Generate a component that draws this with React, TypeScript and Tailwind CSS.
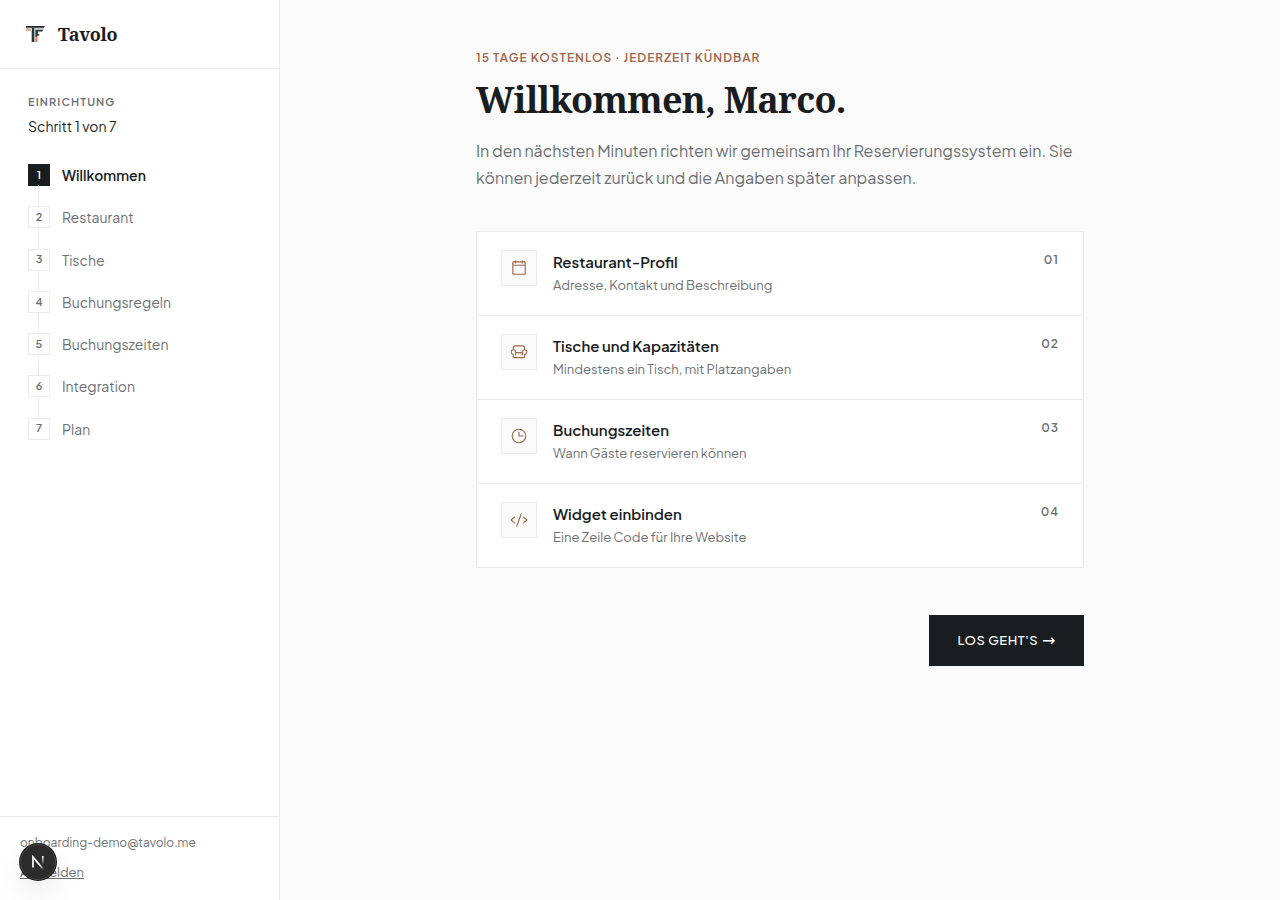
import { PiArmchair, PiCalendarBlank, PiClock, PiCode } from "react-icons/pi";
import type { IconType } from "react-icons";
import clsx from "clsx";

interface Feature {
  icon: IconType;
  title: string;
  description: string;
}

const steps = [
  "Willkommen",
  "Restaurant",
  "Tische",
  "Buchungsregeln",
  "Buchungszeiten",
  "Integration",
  "Plan",
];

const features: Feature[] = [
  {
    icon: PiCalendarBlank,
    title: "Restaurant-Profil",
    description: "Adresse, Kontakt und Beschreibung",
  },
  {
    icon: PiArmchair,
    title: "Tische und Kapazitäten",
    description: "Mindestens ein Tisch, mit Platzangaben",
  },
  {
    icon: PiClock,
    title: "Buchungszeiten",
    description: "Wann Gäste reservieren können",
  },
  {
    icon: PiCode,
    title: "Widget einbinden",
    description: "Eine Zeile Code für Ihre Website",
  },
];

const Logo = () => (
  <svg viewBox="0 0 20 18" className="h-[18px] w-5" aria-hidden="true">
    <path d="M0 1h19l-1.2 1.8H0z" fill="#1f262b" />
    <path d="M0 3.3h6v1H0z" fill="#a9b0b4" />
    <path d="M0 4.4h5v1.4H0z" fill="#d9906f" />
    <path d="M6 2.8h2.4V17H6z" fill="#2b3840" />
    <path d="M5 6h1v11H5z" fill="#b4babd" />
    <path d="M8.4 3.3H18l-.6 1h-9z" fill="#a9b0b4" />
    <path d="M9.4 4.8h7.8l-1 1.8h-4.4v2.6h1.6v1.4h-1.6l-1 1.4H9.4z" fill="#26323a" />
    <path d="M9.4 12.4l2-1.6V17h-2z" fill="#d9744b" />
  </svg>
);

const StepList = ({ current }: { current: number }) => (
  <ol className="mt-[26px] grid h-[296px] grid-rows-7">
    {steps.map((step, index) => {
      const active = index === current;
      return (
        <li
          key={step}
          aria-current={active ? "step" : undefined}
          className="flex gap-3"
        >
          <div className="flex flex-col">
            <span
              className={clsx(
                "flex h-[22px] w-[22px] shrink-0 items-center justify-center border text-[11px] font-semibold",
                active
                  ? "border-[#1a1d1f] bg-[#1a1d1f] text-white"
                  : "border-[#ececec] bg-white text-[#6b7074]"
              )}
            >
              {index + 1}
            </span>
            {index < steps.length - 1 && (
              <span className="-mt-px ml-2.5 w-px flex-1 bg-[#ececec]" />
            )}
          </div>
          <span
            className={clsx(
              "text-sm leading-[23px]",
              active ? "font-semibold text-[#1a1d1f]" : "text-[#6b7074]"
            )}
          >
            {step}
          </span>
        </li>
      );
    })}
  </ol>
);

const Sidebar = () => (
  <aside className="flex w-[280px] shrink-0 flex-col border-r border-[#ececec] bg-white">
    <div className="flex h-[69px] items-center gap-3 border-b border-[#ececec] px-[26px]">
      <Logo />
      <span className="font-['Noto_Serif','DejaVu_Serif',serif] text-lg font-bold tracking-[-0.02em]">
        Tavolo
      </span>
    </div>

    <nav aria-label="Einrichtung" className="flex-1 px-7 pt-6">
      <p className="text-[11px] leading-[18px] font-semibold tracking-widest text-[#6b7074]">
        EINRICHTUNG
      </p>
      <p className="mt-1 text-sm leading-[23px]">Schritt 1 von 7</p>
      <StepList current={0} />
    </nav>

    <div className="flex flex-col items-start border-t border-[#ececec] px-5 py-4 text-[#6b7074]">
      <span className="text-xs leading-5">onboarding-demo@tavolo.me</span>
      <a href="#" className="mt-2 text-[13px] leading-[23px] underline">
        Abmelden
      </a>
    </div>
  </aside>
);

const FeatureRow = ({
  feature,
  number,
}: {
  feature: Feature;
  number: string;
}) => {
  const Icon = feature.icon;
  return (
    <li className="flex items-start gap-4 border-b border-[#ececec] px-6 py-[18px] last:border-b-0">
      <span className="flex h-9 w-9 shrink-0 items-center justify-center border border-[#ececec] bg-[#fafafa] text-[#a0674b]">
        <Icon size={18} />
      </span>
      <div className="flex-1">
        <h2 className="text-[15px] leading-6 font-semibold">{feature.title}</h2>
        <p className="text-[13px] leading-[23px] text-[#6b7074]">
          {feature.description}
        </p>
      </div>
      <span className="text-xs leading-5 font-semibold tracking-[0.08em] text-[#6b7074]">
        {number}
      </span>
    </li>
  );
};

const DevBadge = () => (
  <button
    type="button"
    aria-label="Open Next.js Dev Tools"
    className="fixed bottom-5 left-5 flex h-9 w-9 items-center justify-center rounded-full border border-[#4a4a4a] bg-[#2b2b2b] shadow-[0_0_0_1px_#171717,0_16px_32px_-8px_rgba(0,0,0,0.24)]"
  >
    <svg width="14" height="14" viewBox="0 0 14 14" fill="none">
      <defs>
        <linearGradient id="diag" x1="7" y1="7" x2="12" y2="14" gradientUnits="userSpaceOnUse">
          <stop offset="0.4" stopColor="#fff" />
          <stop offset="1" stopColor="#fff" stopOpacity="0.2" />
        </linearGradient>
        <linearGradient id="stem" x1="12" y1="1" x2="12" y2="10" gradientUnits="userSpaceOnUse">
          <stop stopColor="#fff" />
          <stop offset="1" stopColor="#fff" stopOpacity="0" />
        </linearGradient>
      </defs>
      <path d="M2 12.5V2L12 14" stroke="url(#diag)" strokeWidth="1.7" />
      <path d="M11.8 1v9" stroke="url(#stem)" strokeWidth="1.7" />
    </svg>
  </button>
);

export default function App() {
  return (
    <div className="flex min-h-screen bg-[#fafafa] font-['Plus_Jakarta_Sans',Inter,sans-serif] text-[#1a1d1f]">
      <Sidebar />

      <main className="flex-1 px-8 py-12">
        <div className="mx-auto max-w-[608px]">
          <p className="text-xs leading-5 font-semibold tracking-[0.08em] text-[#a0674b]">
            15 TAGE KOSTENLOS · JEDERZEIT KÜNDBAR
          </p>
          <h1 className="mt-2 font-['Noto_Serif','DejaVu_Serif',serif] text-4xl leading-[48px] font-bold tracking-[-0.02em]">
            Willkommen, Marco.
          </h1>
          <p className="mt-[13px] text-base leading-[27px] text-[#6b7074]">
            In den nächsten Minuten richten wir gemeinsam Ihr
            Reservierungssystem ein. Sie können jederzeit zurück und die Angaben
            später anpassen.
          </p>

          <ul className="mt-10 border border-[#ececec] bg-white">
            {features.map((feature, index) => (
              <FeatureRow
                key={feature.title}
                feature={feature}
                number={`0${index + 1}`}
              />
            ))}
          </ul>

          <div className="mt-[47px] flex justify-end">
            <button
              type="button"
              className="flex h-[51px] items-center gap-1 bg-[#1a1d1f] px-7 text-[13px] font-medium tracking-[0.04em] text-white"
            >
              LOS GEHT'S
              <span className="font-['DejaVu_Sans'] text-base">→</span>
            </button>
          </div>
        </div>
      </main>

      <DevBadge />
    </div>
  );
}
